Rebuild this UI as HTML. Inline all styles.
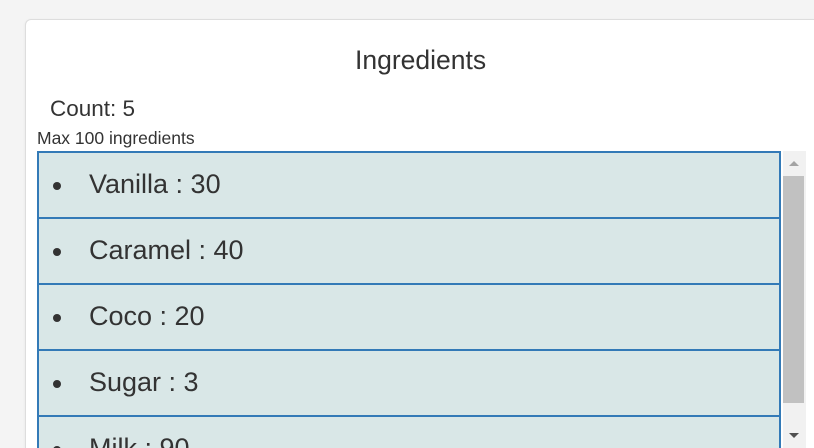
<!DOCTYPE html>
<html><head><style>
html,body{margin:0;width:814px;height:448px;overflow:hidden}
body{background:#f4f4f4;position:relative;font-family:"Liberation Sans",Arial,sans-serif;color:#333}
.card{position:absolute;left:25px;top:19px;width:788px;height:428px;background:#fff;border:1px solid #ddd;border-bottom:none;border-right:none;border-radius:6px 0 0 0;box-shadow:0 1px 3px rgba(0,0,0,.06)}
.t{position:absolute;white-space:nowrap}
.list{position:absolute;left:37px;top:151px;width:744px;height:297px;overflow:hidden}
.item{position:absolute;left:0;width:740px;height:64px;background:#d9e7e7;border:2px solid #337ab7}
.item span{position:absolute;left:50px;top:16px;font-size:27px;color:#333}
.item i{position:absolute;left:14px;top:29px;width:8px;height:8px;border-radius:50%;background:#333}
.sb{position:absolute;left:783px;top:151px;width:23px;height:297px;background:#f1f1f1}
.thumb{position:absolute;left:783px;top:176px;width:21px;height:227px;background:#c1c1c1}
</style></head><body>
<div class="card"></div>
<div class="t" style="left:355px;top:45px;font-size:26.5px">Ingredients</div>
<div class="t" style="left:50px;top:96px;font-size:22.5px">Count: 5</div>
<div class="t" style="left:37px;top:128px;font-size:17.5px">Max 100 ingredients</div>
<div class="list">
<div class="item" style="top:0"><i></i><span>Vanilla : 30</span></div>
<div class="item" style="top:66px"><i></i><span>Caramel : 40</span></div>
<div class="item" style="top:132px"><i></i><span>Coco : 20</span></div>
<div class="item" style="top:198px"><i></i><span>Sugar : 3</span></div>
<div class="item" style="top:264px"><i></i><span>Milk : 90</span></div>
</div>
<div class="sb"></div>
<div class="thumb"></div>
<svg style="position:absolute;left:787px;top:159px" width="14" height="8"><path d="M2 7L7 2L12 7Z" fill="#a3a3a3"/></svg>
<svg style="position:absolute;left:787px;top:432px" width="14" height="8"><path d="M2 1L7 6L12 1Z" fill="#505050"/></svg>
</body></html>
